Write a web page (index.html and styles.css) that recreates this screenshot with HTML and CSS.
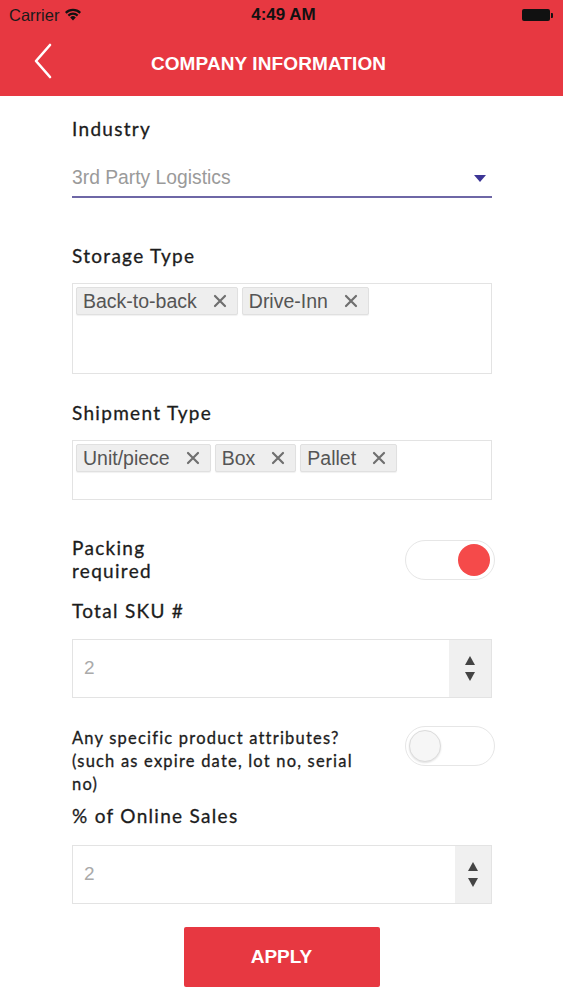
FILE: index.html
```html
<!DOCTYPE html>
<html>
<head>
<meta charset="utf-8">
<link rel="stylesheet" href="styles.css">
</head>
<body>
<div class="top">
  <div class="status">
    <div class="st-left">Carrier
      <svg class="wifi" width="18" height="13" viewBox="0 0 18 13"><path d="M9 12.5 L6.2 9.4 A4 4 0 0 1 11.8 9.4 Z" fill="#111"/><path d="M3.6 6.8 A7.6 7.6 0 0 1 14.4 6.8 L12.9 8.4 A5.4 5.4 0 0 0 5.1 8.4 Z" fill="#111"/><path d="M1 4.1 A11.3 11.3 0 0 1 17 4.1 L15.5 5.7 A9.1 9.1 0 0 0 2.5 5.7 Z" fill="#111"/></svg>
    </div>
    <div class="st-time">4:49 AM</div>
    <div class="st-right"><span class="batt"></span><span class="batt-tip"></span></div>
  </div>
  <div class="nav">
    <svg class="back" width="22" height="36" viewBox="0 0 22 36"><path d="M18 2 L4 18 L18 34" fill="none" stroke="#fff" stroke-width="2.6" stroke-linecap="round" stroke-linejoin="round"/></svg>
    <div class="title">COMPANY INFORMATION</div>
  </div>
</div>

<div class="content">
  <div class="label first">Industry</div>
  <div class="select">
    <span class="select-text">3rd Party Logistics</span>
    <span class="caret"></span>
  </div>

  <div class="label l-storage">Storage Type</div>
  <div class="tagbox tb-tall">
    <span class="tag">Back-to-back <svg class="x" width="14" height="14" viewBox="0 0 14 14"><path d="M2 2 L12 12 M12 2 L2 12" stroke="#6f6f6f" stroke-width="2.2" stroke-linecap="round"/></svg></span>
    <span class="tag">Drive-Inn <svg class="x" width="14" height="14" viewBox="0 0 14 14"><path d="M2 2 L12 12 M12 2 L2 12" stroke="#6f6f6f" stroke-width="2.2" stroke-linecap="round"/></svg></span>
  </div>

  <div class="label l-ship">Shipment Type</div>
  <div class="tagbox tb-short">
    <span class="tag">Unit/piece <svg class="x" width="14" height="14" viewBox="0 0 14 14"><path d="M2 2 L12 12 M12 2 L2 12" stroke="#6f6f6f" stroke-width="2.2" stroke-linecap="round"/></svg></span>
    <span class="tag">Box <svg class="x" width="14" height="14" viewBox="0 0 14 14"><path d="M2 2 L12 12 M12 2 L2 12" stroke="#6f6f6f" stroke-width="2.2" stroke-linecap="round"/></svg></span>
    <span class="tag">Pallet <svg class="x" width="14" height="14" viewBox="0 0 14 14"><path d="M2 2 L12 12 M12 2 L2 12" stroke="#6f6f6f" stroke-width="2.2" stroke-linecap="round"/></svg></span>
  </div>

  <div class="row r-pack">
    <div class="label two">Packing<br>required</div>
    <div class="toggle on"><span class="knob"></span></div>
  </div>

  <div class="label l-sku">Total SKU #</div>
  <div class="num">
    <span class="num-val">2</span>
    <span class="spin"><span class="up"></span><span class="down"></span></span>
  </div>

  <div class="row r-attr">
    <div class="label small">Any specific product attributes?<br>(such as expire date, lot no, serial<br>no)</div>
    <div class="toggle off"><span class="knob"></span></div>
  </div>

  <div class="label l-online">% of Online Sales</div>
  <div class="num n2">
    <span class="num-val">2</span>
    <span class="spin s2"><span class="up"></span><span class="down"></span></span>
  </div>

  <div class="btn-wrap"><div class="btn">APPLY</div></div>
</div>
</body>
</html>
```

FILE: styles.css
```css
* { box-sizing: border-box; }
body { margin: 0; background: #fff; font-family: "Liberation Sans", Arial, sans-serif; width: 563px; height: 1000px; overflow: hidden; }

.top { background: #E73841; height: 96px; }
.status { height: 30px; display: flex; align-items: center; justify-content: space-between; padding: 0 10px 0 9px; position: relative; }
.st-left { font-size: 16.5px; color: #1a1a1a; display: flex; align-items: center; gap: 5px; }
.wifi { margin-top: -2px; }
.st-time { position: absolute; left: 0; right: 0; text-align: center; font-size: 17px; font-weight: bold; color: #111; pointer-events: none; padding-left: 4px; }
.st-right { display: flex; align-items: center; }
.batt { width: 28px; height: 12px; background: #111; border-radius: 2px; display: inline-block; }
.batt-tip { width: 2px; height: 5px; background: #111; display: inline-block; margin-left: 1px; border-radius: 0 1px 1px 0; }

.nav { height: 66px; display: flex; align-items: center; position: relative; padding-left: 32px; }
.back { margin-top: -4px; }
.title { position: absolute; left: 0; right: 0; text-align: center; color: #fff; font-weight: bold; font-size: 19px; letter-spacing: 0.1px; margin-top: 2px; padding-right: 26px; }

.content { padding: 0 71px 0 72px; }
.label { font-family: Lato, "Open Sans", sans-serif; font-weight: 400; color: #1c1c1c; font-size: 19px; letter-spacing: 1.3px; line-height: 22px; -webkit-text-stroke: 0.3px #1c1c1c; }
.label.first { margin-top: 22px; }
.select { margin-top: 26px; height: 32px; border-bottom: 2px solid #6E67A6; display: flex; justify-content: space-between; align-items: flex-start; padding-right: 6px; }
.select-text { color: #9a9a9a; font-size: 19.3px; line-height: 24px; }
.caret { width: 0; height: 0; border-left: 6px solid transparent; border-right: 6px solid transparent; border-top: 7px solid #3C3596; margin-top: 9px; }

.l-storage { margin-top: 47px; }
.tagbox { margin-top: 16px; border: 1px solid #e3e3e3; padding: 3px; display: flex; align-items: flex-start; gap: 4px; }
.tb-tall { height: 91px; }
.tb-short { height: 60px; margin-top: 16px; }
.tag { background: #eeeeee; border: 1px solid #e0e0e0; border-radius: 2px; height: 28px; display: inline-flex; align-items: center; padding: 0 10px 0 6px; font-size: 19.5px; color: #555; box-shadow: 0 1px 1px rgba(0,0,0,0.06); }
.x { margin-left: 16px; }

.l-ship { margin-top: 28px; }

.row { display: flex; justify-content: space-between; align-items: flex-start; }
.r-pack { margin-top: 36px; margin-right: -3px; }
.label.two { line-height: 23px; }
.toggle { width: 90px; height: 40px; border-radius: 20px; border: 1px solid #e6e6e6; background: #fff; position: relative; }
.r-pack .toggle { margin-top: 4px; }
.knob { position: absolute; top: 3px; width: 32px; height: 32px; border-radius: 50%; }
.toggle.on .knob { right: 4px; background: #F54A4A; }
.toggle.off .knob { left: 3px; background: #f6f6f6; border: 1px solid #dcdcdc; box-shadow: 0 1px 2px rgba(0,0,0,0.12); }

.l-sku { margin-top: 18px; }
.num { margin-top: 17px; height: 59px; border: 1px solid #e3e3e3; display: flex; justify-content: space-between; }
.num-val { color: #aaa; font-size: 19px; padding-left: 11px; line-height: 55px; }
.spin { width: 42px; background: #f0f0f0; display: flex; flex-direction: column; align-items: center; justify-content: center; gap: 7px; }
.s2 { width: 36px; }
.up { width: 0; height: 0; border-left: 5.5px solid transparent; border-right: 5.5px solid transparent; border-bottom: 9px solid #444; }
.down { width: 0; height: 0; border-left: 5.5px solid transparent; border-right: 5.5px solid transparent; border-top: 9px solid #444; }

.r-attr { margin-top: 29px; margin-right: -3px; }
.label.small { font-size: 16.5px; line-height: 23px; letter-spacing: 1.2px; }
.r-attr .toggle { margin-top: -1px; }

.l-online { margin-top: 9px; }
.n2 { margin-top: 18px; height: 59px; }

.btn-wrap { display: flex; justify-content: center; margin-top: 23px; margin-left: -1px; }
.btn { width: 196px; height: 60px; background: #E73841; border-radius: 2px; color: #fff; font-weight: bold; font-size: 19px; display: flex; align-items: center; justify-content: center; }
```
